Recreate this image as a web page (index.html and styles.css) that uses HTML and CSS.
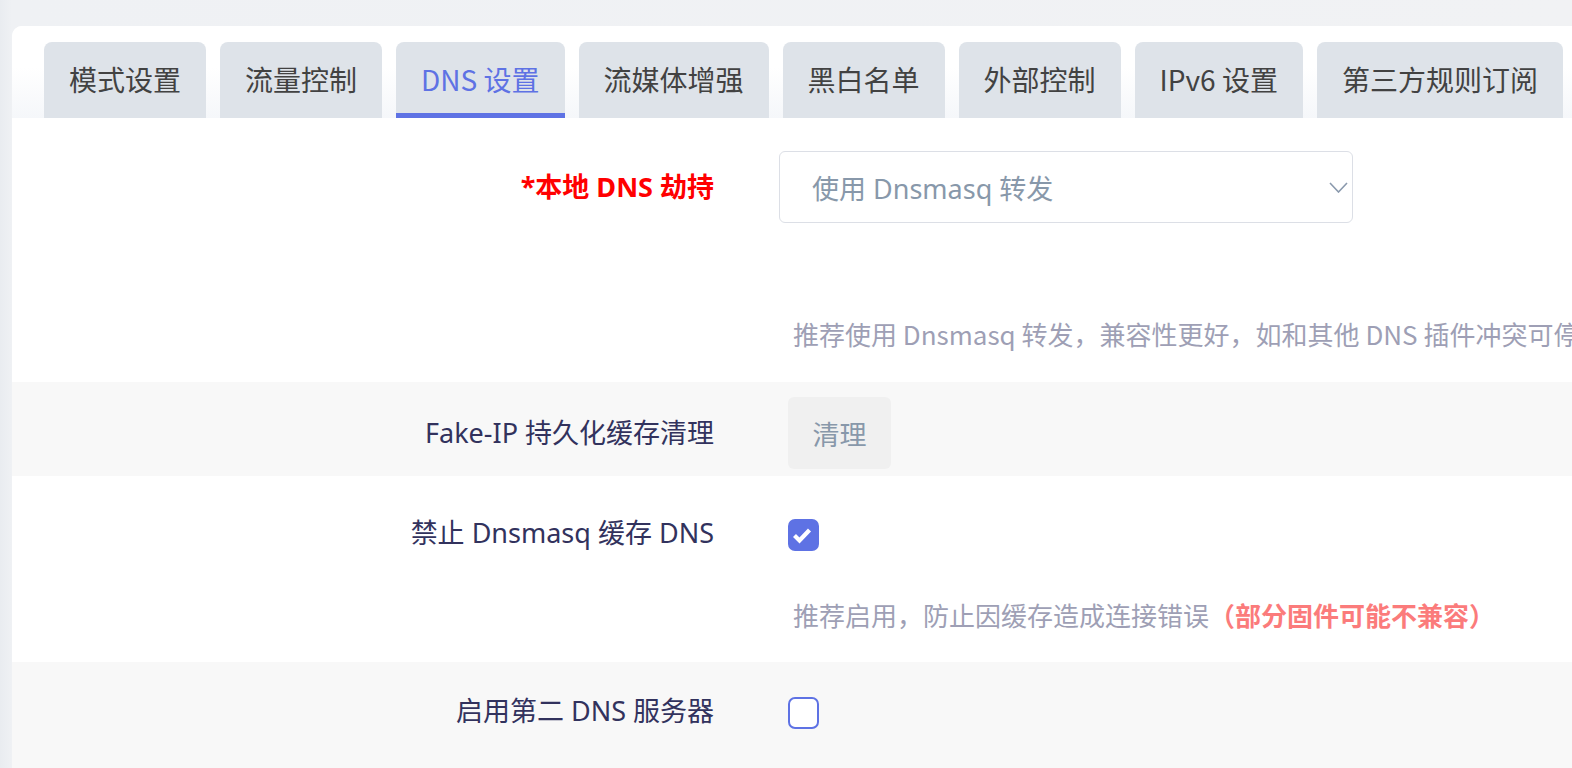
FILE: index.html
```html
<!DOCTYPE html>
<html lang="zh-CN">
<head>
<meta charset="utf-8">
<title>DNS 设置</title>
<link rel="stylesheet" href="styles.css">
</head>
<body>
<div class="page">
  <div class="card">
    <ul class="tabs">
      <li class="tab">模式设置</li>
      <li class="tab">流量控制</li>
      <li class="tab active">DNS 设置</li>
      <li class="tab">流媒体增强</li>
      <li class="tab">黑白名单</li>
      <li class="tab">外部控制</li>
      <li class="tab">IPv6 设置</li>
      <li class="tab">第三方规则订阅</li>
    </ul>
    <div class="panel">
      <div class="row row-hijack">
        <div class="label required">*本地 DNS 劫持</div>
        <div class="field">
          <div class="select">
            <span class="select-text">使用 Dnsmasq 转发</span>
            <svg class="chevron" width="19" height="11" viewBox="0 0 19 11"><polyline points="1,1 9.5,10 18,1" fill="none" stroke="#8a99ad" stroke-width="1.6"/></svg>
          </div>
          <div class="desc desc-hijack">推荐使用 Dnsmasq 转发，兼容性更好，如和其他 DNS 插件冲突可停用此功能</div>
        </div>
      </div>
      <div class="row alt row-clean">
        <div class="label tall">Fake-IP 持久化缓存清理</div>
        <div class="field">
          <button class="btn">清理</button>
        </div>
      </div>
      <div class="row row-cache">
        <div class="label">禁止 Dnsmasq 缓存 DNS</div>
        <div class="field">
          <div class="check-line">
            <span class="checkbox checked">
              <svg width="32" height="32" viewBox="0 0 32 32"><polyline points="6.5,16.5 11.5,21.5 21.5,11" fill="none" stroke="#fff" stroke-width="4.2" stroke-linejoin="miter"/></svg>
            </span>
          </div>
          <div class="desc desc-cache">推荐启用，防止因缓存造成连接错误<b class="warn">（部分固件可能不兼容）</b></div>
        </div>
      </div>
      <div class="row alt row-second">
        <div class="label">启用第二 DNS 服务器</div>
        <div class="field">
          <div class="check-line">
            <span class="checkbox"></span>
          </div>
        </div>
      </div>
    </div>
  </div>
</div>
</body>
</html>
```

FILE: styles.css
```css
* { box-sizing: border-box; }
html, body {
  margin: 0;
  padding: 0;
  width: 1572px;
  height: 768px;
  overflow: hidden;
}
body {
  background: linear-gradient(90deg, #e9ecf0 0, #eff1f4 12px, #f1f2f4 100%);
  font-family: "Noto Sans", "Noto Sans CJK SC", sans-serif;
}
.page {
  padding: 26px 0 0 12px;
}
.card {
  width: 1640px;
  background: #fff;
  border-radius: 10px 0 0 0;
  min-height: 760px;
}
.tabs {
  list-style: none;
  margin: 0;
  padding: 16px 0 0 32px;
  display: flex;
  gap: 14px;
  background: linear-gradient(180deg, #ffffff 0, #ffffff 45%, #f5f7fa 100%);
  border-radius: 10px 0 0 0;
}
.tab {
  height: 76px;
  padding: 0 25px;
  background: #dee3e9;
  border-radius: 8px 8px 0 0;
  font-family: "Noto Sans CJK SC", sans-serif;
  font-size: 28px;
  line-height: 74px;
  color: #424242;
  white-space: nowrap;
}
.tab.active {
  color: #5e72e4;
  border-bottom: 5px solid #5e72e4;
}
.panel {
  background: #fff;
}
.row {
  display: grid;
  grid-template-columns: 702px 1fr;
  column-gap: 65px;
  align-items: start;
}
.row.alt {
  background: #f8f8f8;
}
.label {
  text-align: right;
  font-size: 27px;
  line-height: 34px;
  color: #32325d;
  white-space: nowrap;
}
.label.required {
  color: #ff0000;
  font-weight: 700;
  line-height: 72px;
}
.label.tall {
  line-height: 72px;
}
.field {
  min-width: 0;
  white-space: nowrap;
}
.row-hijack {
  padding: 33px 0 31px;
}
.select {
  width: 574px;
  height: 72px;
  border: 1.5px solid #dcdfe6;
  border-radius: 6px;
  display: flex;
  align-items: center;
  justify-content: space-between;
  padding: 0 4px 0 32px;
  background: #fff;
}
.select-text {
  font-size: 27px;
  color: #8898aa;
}
.desc {
  font-family: "Noto Sans CJK SC", sans-serif;
  font-size: 26px;
  line-height: 34px;
  color: #9e9fb5;
  padding-left: 14px;
}
.desc-hijack {
  margin-top: 94px;
}
.row-clean {
  padding: 15px 0 7px;
}
.btn {
  margin-left: 9px;
  width: 103px;
  height: 72px;
  border: none;
  border-radius: 6px;
  background: #f0f0f0;
  color: #8898aa;
  font-family: "Noto Sans CJK SC", sans-serif;
  font-size: 27px;
  padding: 0;
}
.row-cache {
  padding: 40px 0 30px;
}
.check-line {
  height: 34px;
  padding-left: 9px;
}
.checkbox {
  display: block;
  width: 31px;
  height: 32px;
  margin-top: 3px;
  border: 2px solid #5e72e4;
  border-radius: 7px;
  background: #fff;
}
.checkbox.checked {
  background: #5e72e4;
  border: none;
  overflow: hidden;
}
.checkbox svg {
  display: block;
}
.desc-cache {
  margin-top: 45px;
}
.warn {
  color: #fb7b7b;
  font-weight: 700;
}
.row-second {
  padding: 32px 0 60px;
}
```
